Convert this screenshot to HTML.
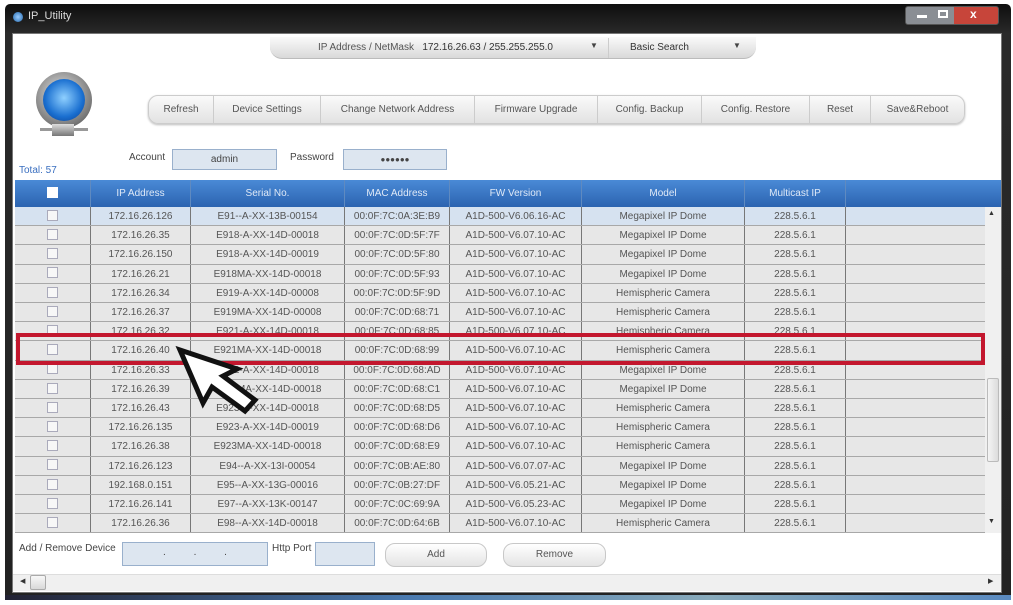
<!DOCTYPE html>
<html><head><meta charset="utf-8"><style>
*{box-sizing:border-box;margin:0;padding:0}
body{width:1013px;height:605px;overflow:hidden;background:#fff;font-family:"Liberation Sans",sans-serif;font-size:10px;color:#333;position:relative}
.abs{position:absolute}
.frame{left:5px;top:4px;width:1006px;height:596px;background:linear-gradient(#0e0e0e,#2a2a2a 30px,#222);border-radius:5px}
.client{left:12px;top:33px;width:990px;height:560px;background:#fff;border:1px solid #777}
.tab{left:270px;top:37px;width:486px;height:22px;background:linear-gradient(#fafafa,#d9d9d9);border-radius:0 0 12px 12px;border-bottom:1px solid #bbb}
.tb{left:148px;top:95px;width:817px;height:29px;background:linear-gradient(#fafafa,#e2e2e2);border:1px solid #ccc;border-radius:10px;display:flex;box-shadow:0 1px 2px #bbb}
.tb div{border-right:1px solid #ccc;text-align:center;line-height:27px;color:#555}
.inp{background:#dde6f0;border:1px solid #99b0cc;text-align:center;line-height:20px;color:#444}
.hdr{left:15px;top:180px;width:986px;height:27px;background:linear-gradient(#4a8ad6,#2b63b0);display:flex;color:#dfe9f7}
.hdr div,.row div{text-align:center;border-right:1px solid #8a9ab0}
.hdr div{line-height:27px;border-right-color:#5f8ac0}
.row{position:absolute;left:15px;width:970px;height:19.2px;display:flex;background:#e7e7e7;border-bottom:1px solid #a8a8a8;color:#555;line-height:20px}
.row div{border-right-color:#777}
.cb{display:inline-block;width:11px;height:11px;border:1px solid #aab;background:#f7f7f7;vertical-align:middle;margin-top:-2px}
.c0{width:76px}.c1{width:100px}.c2{width:154px}.c3{width:105px}.c4{width:132px}.c5{width:163px}.c6{width:101px}.c7{flex:1;border-right:none!important}
.btn{background:linear-gradient(#fff,#e4e4e4);border:1px solid #c8c8c8;border-radius:10px;text-align:center;line-height:22px;color:#555}
</style></head><body>
<div class="abs frame"></div>
<div class="abs" style="left:13px;top:12px;width:10px;height:10px;border-radius:50%;background:radial-gradient(#9cf,#26a)"></div>
<div class="abs" style="left:28px;top:10px;color:#ddd;font-size:11px">IP_Utility</div>
<div class="abs" style="left:905px;top:6px;width:94px;height:19px;border-radius:3px;background:linear-gradient(90deg,#8a8e94 0 52%,#c7453a 52%);border:1px solid #555"></div>
<div class="abs" style="left:917px;top:15px;width:10px;height:3px;background:#fff"></div>
<div class="abs" style="left:938px;top:10px;width:10px;height:8px;border:2px solid #fff"></div>
<div class="abs" style="left:970px;top:7px;color:#fff;font-size:12px;font-weight:bold">x</div>
<div class="abs client"></div>
<div class="abs tab"></div>
<div class="abs" style="left:318px;top:42px;color:#555">IP Address / NetMask&nbsp;&nbsp; <span style="color:#333">172.16.26.63 / 255.255.255.0</span></div>
<div class="abs" style="left:590px;top:41px;font-size:8px;color:#444">▼</div>
<div class="abs" style="left:608px;top:38px;width:1px;height:20px;background:#ccc"></div>
<div class="abs" style="left:630px;top:42px;color:#333">Basic Search</div>
<div class="abs" style="left:733px;top:41px;font-size:8px;color:#444">▼</div>
<div class="abs" style="left:36px;top:72px;width:56px;height:56px;border-radius:50%;background:radial-gradient(circle at 45% 40%,#e8e8e8,#777 70%,#333)"></div>
<div class="abs" style="left:43px;top:79px;width:42px;height:42px;border-radius:50%;background:radial-gradient(circle at 50% 45%,#8fd0ff,#1a6fd0 60%,#0a3a8a)"></div>
<div class="abs" style="left:40px;top:128px;width:48px;height:3px;background:#999"></div>
<div class="abs" style="left:52px;top:124px;width:22px;height:12px;background:linear-gradient(#ddd,#777)"></div>
<div class="abs tb"><div style="width:65px">Refresh</div><div style="width:107px">Device Settings</div><div style="width:154px">Change Network Address</div><div style="width:123px">Firmware Upgrade</div><div style="width:104px">Config. Backup</div><div style="width:108px">Config. Restore</div><div style="width:61px">Reset</div><div style="flex:1;border:none">Save&amp;Reboot</div></div>
<div class="abs" style="left:129px;top:152px;color:#444">Account</div>
<div class="abs inp" style="left:172px;top:149px;width:105px;height:21px">admin</div>
<div class="abs" style="left:290px;top:152px;color:#444">Password</div>
<div class="abs inp" style="left:343px;top:149px;width:104px;height:21px;font-size:8px">●●●●●●</div>
<div class="abs" style="left:19px;top:165px;color:#3a6fc0">Total: 57</div>
<div class="abs hdr"><div class="c0"><span class="cb" style="background:#fff;border-color:#fff"></span></div><div class="c1">IP Address</div><div class="c2">Serial No.</div><div class="c3">MAC Address</div><div class="c4">FW Version</div><div class="c5">Model</div><div class="c6">Multicast IP</div><div class="c7"></div></div>
<div id="rows"></div>
<div class="abs" style="left:985px;top:207px;width:16px;height:326px;background:#f0f0f0"></div>
<div class="abs" style="left:988px;top:210px;font-size:7px">▲</div>
<div class="abs" style="left:987px;top:378px;width:12px;height:84px;background:linear-gradient(90deg,#f4f4f4,#dcdcdc);border:1px solid #bbb;border-radius:2px"></div>
<div class="abs" style="left:988px;top:518px;font-size:7px">▼</div>
<div class="abs" style="left:19px;top:543px;color:#444">Add / Remove Device</div>
<div class="abs inp" style="left:122px;top:542px;width:146px;height:24px">.&nbsp;&nbsp;&nbsp;&nbsp;&nbsp;&nbsp;&nbsp;&nbsp;&nbsp;&nbsp;.&nbsp;&nbsp;&nbsp;&nbsp;&nbsp;&nbsp;&nbsp;&nbsp;&nbsp;&nbsp;.</div>
<div class="abs" style="left:272px;top:543px;color:#444">Http Port</div>
<div class="abs inp" style="left:315px;top:542px;width:60px;height:24px"></div>
<div class="abs btn" style="left:385px;top:543px;width:102px;height:24px">Add</div>
<div class="abs btn" style="left:503px;top:543px;width:103px;height:24px">Remove</div>
<div class="abs" style="left:13px;top:574px;width:988px;height:17px;background:#f0f0f0;border-top:1px solid #ddd"></div>
<div class="abs" style="left:20px;top:577px;font-size:7px">◀</div>
<div class="abs" style="left:30px;top:575px;width:16px;height:15px;background:linear-gradient(#f8f8f8,#d8d8d8);border:1px solid #aaa;border-radius:2px"></div>
<div class="abs" style="left:988px;top:577px;font-size:7px">▶</div>
<div class="abs" style="left:5px;top:595px;width:1006px;height:5px;background:linear-gradient(90deg,#223,#4a7ab0 40%,#8ab 70%,#5a8ac0)"></div>
<div class="abs" style="left:16px;top:333px;width:969px;height:32px;border:4px solid #c3172e"></div>
<svg class="abs" style="left:175px;top:345px" width="95" height="72" viewBox="0 0 95 72"><path d="M5 5 L28 58 L37 42 L70 66 L80 55 L48 31 L62 24 Z" fill="#fff" stroke="#111" stroke-width="5" stroke-linejoin="miter"/></svg>
<script>
var d=[["172.16.26.126","E91--A-XX-13B-00154","00:0F:7C:0A:3E:B9","A1D-500-V6.06.16-AC","Megapixel IP Dome"],
["172.16.26.35","E918-A-XX-14D-00018","00:0F:7C:0D:5F:7F","A1D-500-V6.07.10-AC","Megapixel IP Dome"],
["172.16.26.150","E918-A-XX-14D-00019","00:0F:7C:0D:5F:80","A1D-500-V6.07.10-AC","Megapixel IP Dome"],
["172.16.26.21","E918MA-XX-14D-00018","00:0F:7C:0D:5F:93","A1D-500-V6.07.10-AC","Megapixel IP Dome"],
["172.16.26.34","E919-A-XX-14D-00008","00:0F:7C:0D:5F:9D","A1D-500-V6.07.10-AC","Hemispheric Camera"],
["172.16.26.37","E919MA-XX-14D-00008","00:0F:7C:0D:68:71","A1D-500-V6.07.10-AC","Hemispheric Camera"],
["172.16.26.32","E921-A-XX-14D-00018","00:0F:7C:0D:68:85","A1D-500-V6.07.10-AC","Hemispheric Camera"],
["172.16.26.40","E921MA-XX-14D-00018","00:0F:7C:0D:68:99","A1D-500-V6.07.10-AC","Hemispheric Camera"],
["172.16.26.33","E922-A-XX-14D-00018","00:0F:7C:0D:68:AD","A1D-500-V6.07.10-AC","Megapixel IP Dome"],
["172.16.26.39","E922MA-XX-14D-00018","00:0F:7C:0D:68:C1","A1D-500-V6.07.10-AC","Megapixel IP Dome"],
["172.16.26.43","E923-A-XX-14D-00018","00:0F:7C:0D:68:D5","A1D-500-V6.07.10-AC","Hemispheric Camera"],
["172.16.26.135","E923-A-XX-14D-00019","00:0F:7C:0D:68:D6","A1D-500-V6.07.10-AC","Hemispheric Camera"],
["172.16.26.38","E923MA-XX-14D-00018","00:0F:7C:0D:68:E9","A1D-500-V6.07.10-AC","Hemispheric Camera"],
["172.16.26.123","E94--A-XX-13I-00054","00:0F:7C:0B:AE:80","A1D-500-V6.07.07-AC","Megapixel IP Dome"],
["192.168.0.151","E95--A-XX-13G-00016","00:0F:7C:0B:27:DF","A1D-500-V6.05.21-AC","Megapixel IP Dome"],
["172.16.26.141","E97--A-XX-13K-00147","00:0F:7C:0C:69:9A","A1D-500-V6.05.23-AC","Megapixel IP Dome"],
["172.16.26.36","E98--A-XX-14D-00018","00:0F:7C:0D:64:6B","A1D-500-V6.07.10-AC","Hemispheric Camera"]];
var h="";d.forEach(function(r,i){h+='<div class="row" style="top:'+(207+i*19.2)+'px;'+(i==0?'background:#d6e2f0':'')+'"><div class="c0"><span class="cb"></span></div><div class="c1">'+r[0]+'</div><div class="c2">'+r[1]+'</div><div class="c3">'+r[2]+'</div><div class="c4">'+r[3]+'</div><div class="c5">'+r[4]+'</div><div class="c6">228.5.6.1</div><div class="c7"></div></div>';});
document.getElementById("rows").innerHTML=h;
</script>
</body></html>
